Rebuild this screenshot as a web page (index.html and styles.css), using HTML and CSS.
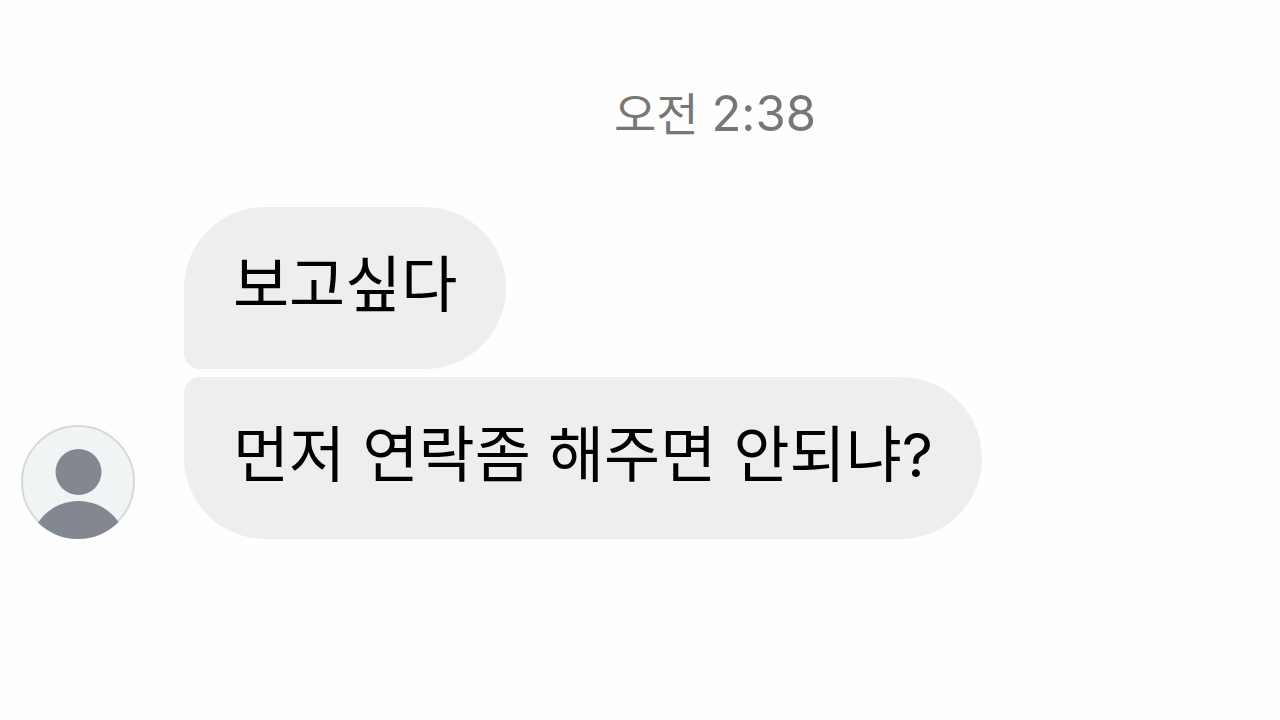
FILE: index.html
```html
<!DOCTYPE html>
<html lang="ko">
<head>
<meta charset="utf-8">
<meta name="viewport" content="width=device-width, initial-scale=1">
<title>Chat</title>
<link rel="stylesheet" href="styles.css">
</head>
<body>
<main class="chat">
  <time class="timestamp" datetime="02:38">오전 <span class="clock">2:38</span></time>
  <section class="group">
    <svg class="avatar" viewBox="0 0 114 114" role="img" aria-label="Profile">
      <defs><clipPath id="disc"><circle cx="57" cy="57" r="57"/></clipPath></defs>
      <circle cx="57" cy="57" r="56" fill="#f0f4f5" stroke="#d6d9da" stroke-width="2"/>
      <g clip-path="url(#disc)" fill="#828790">
        <circle cx="57.500" cy="47" r="23"/>
        <ellipse cx="57.500" cy="123" rx="48" ry="47"/>
      </g>
    </svg>
    <div class="messages">
      <p class="bubble bubble-first">보고싶다</p>
      <p class="bubble bubble-last">먼저 연락좀 해주면 안되냐?</p>
    </div>
  </section>
</main>
</body>
</html>
```

FILE: styles.css
```css
* { box-sizing: border-box; }
body {
  margin: 0;
  background: #fefefe;
  color: #000;
  font-family: Inter, "Noto Sans CJK KR", sans-serif;
}
.chat {
  display: flex;
  flex-direction: column;
  gap: 61px;
  padding: 82px 21px 40px;
}
.timestamp {
  align-self: center;
  margin-left: 150px;
  color: #777;
  font-size: 46px;
  line-height: 64px;
}
.clock { font-size: 49px; }
.group {
  display: flex;
  align-items: flex-end;
  gap: 49px;
}
.avatar {
  flex: none;
  width: 114px;
  height: 114px;
}
.messages {
  display: flex;
  flex-direction: column;
  align-items: flex-start;
  gap: 8px;
}
.bubble {
  margin: 0;
  padding: 38px 49px 44px;
  background: #eee;
  border-radius: 81px;
  font-size: 61px;
  line-height: 80px;
}
.bubble-first { border-bottom-left-radius: 16px; }
.bubble-last { border-top-left-radius: 16px; }
```
